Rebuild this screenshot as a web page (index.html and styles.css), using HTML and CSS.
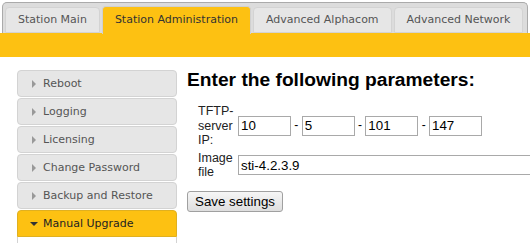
FILE: index.html
```html
<!DOCTYPE html>
<html>
<head>
<meta charset="utf-8">
<title>Station Administration</title>
<link rel="stylesheet" href="styles.css">
</head>
<body>
<div class="tabs">
  <ul class="tab-list">
    <li class="tab">Station Main</li>
    <li class="tab tab-active">Station Administration</li>
    <li class="tab">Advanced Alphacom</li>
    <li class="tab">Advanced Network</li>
  </ul>
</div>
<div class="bar"></div>
<div class="page">
  <ul class="menu">
    <li class="menu-item"><span class="arrow"></span>Reboot</li>
    <li class="menu-item"><span class="arrow"></span>Logging</li>
    <li class="menu-item"><span class="arrow"></span>Licensing</li>
    <li class="menu-item"><span class="arrow"></span>Change Password</li>
    <li class="menu-item"><span class="arrow"></span>Backup and Restore</li>
    <li class="menu-item menu-open"><span class="arrow arrow-down"></span>Manual Upgrade</li>
    <li class="menu-panel"></li>
  </ul>
  <div class="content">
    <h2 class="title">Enter the following parameters:</h2>
    <div class="form">
      <div class="label">TFTP-server IP:</div>
      <div class="field">
        <input class="ip" type="text" value="10"> - <input class="ip" type="text" value="5"> - <input class="ip" type="text" value="101"> - <input class="ip" type="text" value="147">
      </div>
      <div class="label">Image file</div>
      <div class="field">
        <input class="file" type="text" value="sti-4.2.3.9">
      </div>
    </div>
    <button class="save" type="button">Save settings</button>
  </div>
</div>
</body>
</html>
```
FILE: styles.css
```css
html, body {
  margin: 0;
  padding: 0;
  background: #fff;
  overflow: hidden;
}
body {
  font-family: "DejaVu Sans", Verdana, sans-serif;
  font-size: 11px;
}
.tabs {
  margin: 2px 2px 0 2px;
  border: 1px solid #aaa;
  border-bottom: none;
  border-radius: 5px 5px 0 0;
  background: #dcdcdc;
  padding: 4px 2px 0 2px;
  height: 26px;
}
.tab-list {
  list-style: none;
  margin: 0;
  padding: 0;
  display: flex;
  align-items: flex-end;
  gap: 2px;
  height: 26px;
}
.tab {
  box-sizing: border-box;
  height: 26px;
  line-height: 24px;
  padding: 0 12px 0 12px;
  background: #e6e6e6;
  border: 1px solid #d3d3d3;
  border-radius: 4px 4px 0 0;
  color: #555;
  white-space: nowrap;
}
.tab-active {
  height: 28px;
  margin-bottom: -1px;
  line-height: 26px;
  background: #fdc112;
  border-color: #d0d0d0;
  border-bottom: none;
  color: #333;
}
.bar {
  height: 24px;
  background: #fdc112;
}
.page {
  display: flex;
  gap: 10px;
  padding: 12px 0 0 17px;
}
.menu {
  list-style: none;
  margin: 1px 0 0 0;
  padding: 0;
  width: 160px;
  flex: none;
}
.menu-item {
  box-sizing: border-box;
  height: 27px;
  margin-bottom: 1px;
  line-height: 25px;
  padding-left: 14px;
  background: #e6e6e6;
  border: 1px solid #d3d3d3;
  border-radius: 4px;
  color: #555;
  display: flex;
  align-items: center;
}
.arrow {
  width: 0;
  height: 0;
  border-top: 4px solid transparent;
  border-bottom: 4px solid transparent;
  border-left: 4px solid #999;
  margin-right: 7px;
}
.menu-open {
  background: #fdc112;
  border-color: #e0b020;
  border-radius: 4px 4px 0 0;
  margin-bottom: 0;
  color: #222;
  padding-left: 12px;
}
.arrow-down {
  border-left: 4px solid transparent;
  border-right: 4px solid transparent;
  border-top: 4px solid #333;
  border-bottom: none;
  margin-right: 5px;
}
.menu-panel {
  height: 40px;
  border: 1px solid #d3d3d3;
  border-top: none;
  background: #fff;
}
.content {
  font-family: "Liberation Sans", Arial, sans-serif;
  color: #000;
  min-width: 0;
}
.title {
  margin: 0;
  font-size: 19.2px;
  font-weight: bold;
  line-height: 22px;
}
.form {
  display: grid;
  grid-template-columns: 36px auto;
  column-gap: 4px;
  row-gap: 3px;
  padding-left: 11px;
  margin-top: 13px;
  align-items: center;
}
.label {
  font-size: 12.5px;
  line-height: 14.5px;
  color: #222;
}
.field {
  font-size: 12px;
  white-space: nowrap;
}
.field input {
  box-sizing: border-box;
  height: 20px;
  border: 1px solid #a9a9a9;
  padding: 1px 2px;
  margin: 0;
  font-family: "Liberation Sans", Arial, sans-serif;
  font-size: 13.33px;
  color: #000;
  vertical-align: middle;
}
.ip {
  width: 53px;
}
.file {
  width: 330px;
}
.save {
  margin-top: 11px;
  box-sizing: border-box;
  height: 21px;
  padding: 0 7px;
  font-family: "Liberation Sans", Arial, sans-serif;
  font-size: 13.33px;
  color: #000;
  background: linear-gradient(#f6f6f6, #dedede);
  border: 1px solid #a0a0a0;
  border-radius: 3px;
}
```
